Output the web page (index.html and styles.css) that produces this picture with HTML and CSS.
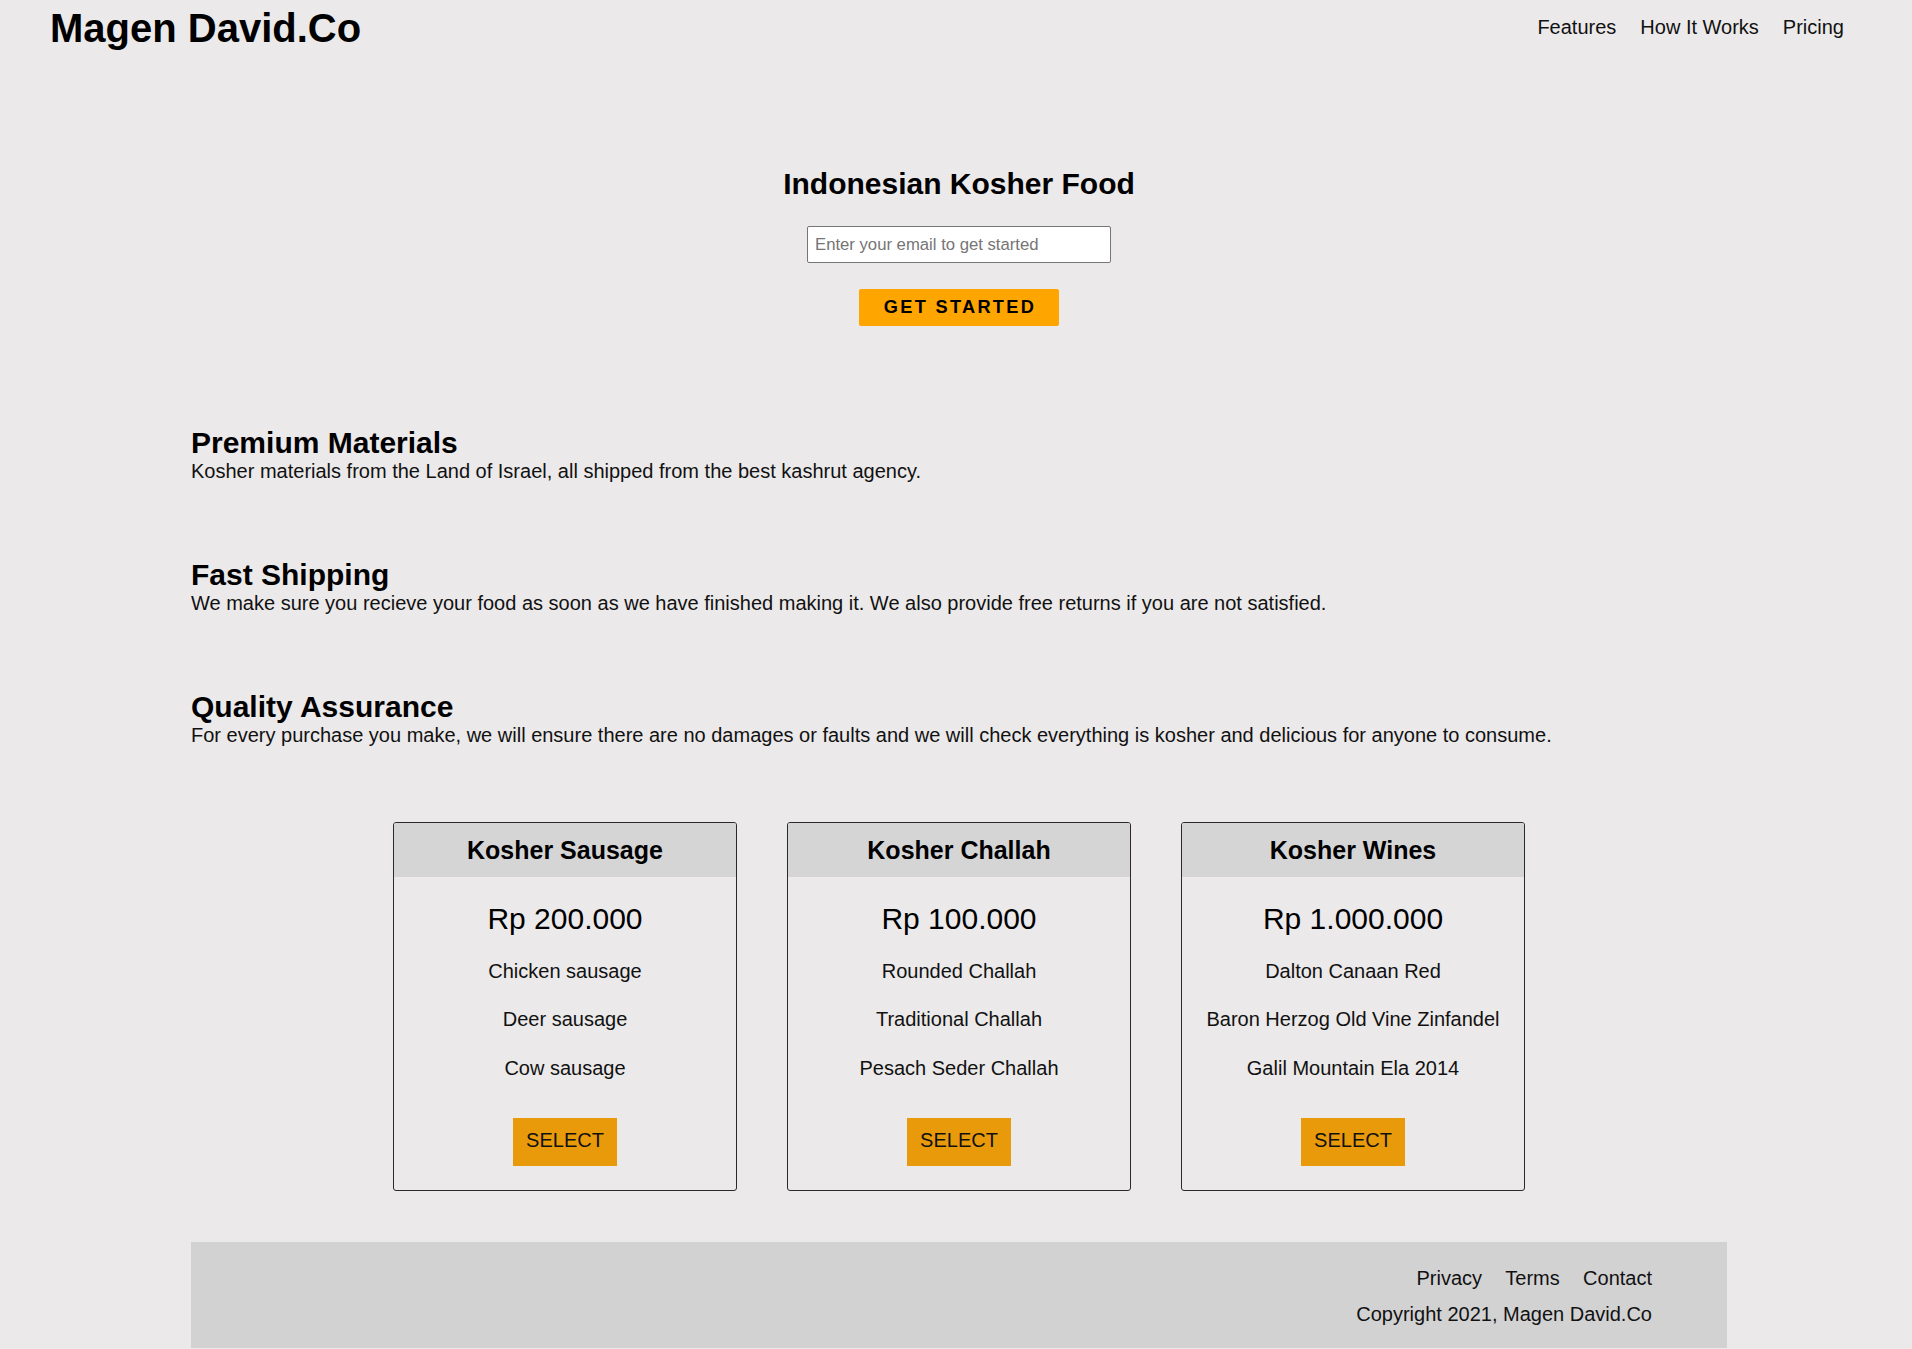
FILE: index.html
```html
<!DOCTYPE html>
<html lang="en">
<head>
<meta charset="utf-8">
<title>Magen David.Co</title>
<link rel="stylesheet" href="styles.css">
</head>
<body>
<header class="site-header">
  <div class="logo">Magen David.Co</div>
  <nav class="nav">
    <a class="nav-link" href="#features">Features</a>
    <a class="nav-link" href="#how">How It Works</a>
    <a class="nav-link" href="#pricing">Pricing</a>
  </nav>
</header>

<main class="container">
  <section class="hero">
    <h2 class="hero-title">Indonesian Kosher Food</h2>
    <form class="signup">
      <input class="email-input" type="email" placeholder="Enter your email to get started">
      <button class="cta" type="button">GET STARTED</button>
    </form>
  </section>

  <section class="features" id="features">
    <div class="feature">
      <h2 class="feature-title">Premium Materials</h2>
      <p class="feature-text">Kosher materials from the Land of Israel, all shipped from the best kashrut agency.</p>
    </div>
    <div class="feature">
      <h2 class="feature-title">Fast Shipping</h2>
      <p class="feature-text">We make sure you recieve your food as soon as we have finished making it. We also provide free returns if you are not satisfied.</p>
    </div>
    <div class="feature">
      <h2 class="feature-title">Quality Assurance</h2>
      <p class="feature-text">For every purchase you make, we will ensure there are no damages or faults and we will check everything is kosher and delicious for anyone to consume.</p>
    </div>
  </section>

  <section class="pricing" id="pricing">
    <div class="card">
      <div class="card-head">Kosher Sausage</div>
      <div class="card-body">
        <div class="price">Rp 200.000</div>
        <ul class="items">
          <li>Chicken sausage</li>
          <li>Deer sausage</li>
          <li>Cow sausage</li>
        </ul>
        <button class="select" type="button">SELECT</button>
      </div>
    </div>
    <div class="card">
      <div class="card-head">Kosher Challah</div>
      <div class="card-body">
        <div class="price">Rp 100.000</div>
        <ul class="items">
          <li>Rounded Challah</li>
          <li>Traditional Challah</li>
          <li>Pesach Seder Challah</li>
        </ul>
        <button class="select" type="button">SELECT</button>
      </div>
    </div>
    <div class="card">
      <div class="card-head">Kosher Wines</div>
      <div class="card-body">
        <div class="price">Rp 1.000.000</div>
        <ul class="items">
          <li>Dalton Canaan Red</li>
          <li>Baron Herzog Old Vine Zinfandel</li>
          <li>Galil Mountain Ela 2014</li>
        </ul>
        <button class="select" type="button">SELECT</button>
      </div>
    </div>
  </section>

  <footer class="footer">
    <ul class="footer-links">
      <li><a class="footer-link" href="#">Privacy</a></li>
      <li><a class="footer-link" href="#">Terms</a></li>
      <li><a class="footer-link" href="#">Contact</a></li>
    </ul>
    <p class="copyright">Copyright 2021, Magen David.Co</p>
  </footer>
</main>
</body>
</html>
```

FILE: styles.css
```css
* {
  box-sizing: border-box;
}

html, body {
  margin: 0;
  padding: 0;
}

body {
  background: #ebe9ea;
  color: #111;
  font-family: "Liberation Sans", Arial, sans-serif;
  font-size: 20px;
  line-height: 22.5px;
  overflow: hidden;
}

/* Header */
.site-header {
  height: 55px;
  display: flex;
  align-items: center;
  justify-content: space-between;
  padding: 0 68px 0 50px;
}

.logo {
  font-size: 40px;
  line-height: 40px;
  font-weight: bold;
  color: #000;
}

.nav {
  display: flex;
  gap: 24px;
}

.nav-link {
  color: #111;
  text-decoration: none;
  font-size: 20px;
  line-height: 22.5px;
}

/* Main container */
.container {
  width: 1536px;
  margin-left: 191px;
}

/* Hero */
.hero {
  padding-top: 112px;
  display: flex;
  flex-direction: column;
  align-items: center;
}

.hero-title {
  margin: 0;
  font-size: 30px;
  line-height: 34px;
  font-weight: bold;
  color: #000;
}

.signup {
  margin: 25px 0 0;
  display: flex;
  flex-direction: column;
  align-items: center;
}

.email-input {
  width: 304px;
  height: 37px;
  border: 1px solid #767676;
  border-radius: 2px;
  background: #fff;
  padding: 0 7px;
  font-family: "Liberation Sans", Arial, sans-serif;
  font-size: 16.7px;
  color: #111;
}

.email-input::placeholder {
  color: #757575;
}

.cta {
  margin-top: 26px;
  width: 200px;
  height: 37px;
  border: none;
  border-radius: 2px;
  background: #ffa500;
  color: #000;
  font-family: "Liberation Sans", Arial, sans-serif;
  font-size: 18.2px;
  font-weight: bold;
  letter-spacing: 2.3px;
  padding: 0 0 0 2px;
}

/* Features */
.features {
  padding-top: 100px;
  display: flex;
  flex-direction: column;
  gap: 75.5px;
}

.feature-title {
  margin: 0;
  font-size: 30px;
  line-height: 34px;
  font-weight: bold;
  color: #000;
}

.feature-text {
  margin: 0;
  font-size: 20px;
  line-height: 22.5px;
}

/* Pricing */
.pricing {
  margin-top: 75.7px;
  display: flex;
  justify-content: center;
  gap: 50px;
}

.card {
  width: 344px;
  border: 1px solid #2a2a2a;
  border-radius: 3px;
  overflow: hidden;
  text-align: center;
}

.card-head {
  height: 54px;
  line-height: 54px;
  background: #d6d5d6;
  font-size: 25px;
  font-weight: bold;
  color: #000;
}

.card-body {
  padding: 25px 0 24px;
  display: flex;
  flex-direction: column;
  align-items: center;
}

.price {
  font-size: 30px;
  line-height: 34px;
  color: #000;
}

.items {
  list-style: none;
  margin: 24px 0 0;
  padding: 0;
  display: flex;
  flex-direction: column;
  gap: 25.8px;
}

.items li {
  font-size: 20px;
  line-height: 22.5px;
}

.select {
  margin-top: 39px;
  height: 48px;
  border: none;
  background: #e99a0b;
  color: #111;
  font-family: "Liberation Sans", Arial, sans-serif;
  font-size: 20px;
  line-height: 22.5px;
  padding: 11px 13px 14.5px;
}

/* Footer */
.footer {
  margin-top: 51px;
  background: #d3d2d3;
  padding: 25px 75px 22px 0;
  display: flex;
  flex-direction: column;
  align-items: flex-end;
}

.footer-links {
  list-style: none;
  margin: 0;
  padding: 0;
  display: flex;
  gap: 23.3px;
}

.footer-link {
  color: #111;
  text-decoration: none;
  font-size: 20px;
  line-height: 22.5px;
}

.copyright {
  margin: 13.5px 0 0;
  font-size: 20px;
  line-height: 22.5px;
}
```
